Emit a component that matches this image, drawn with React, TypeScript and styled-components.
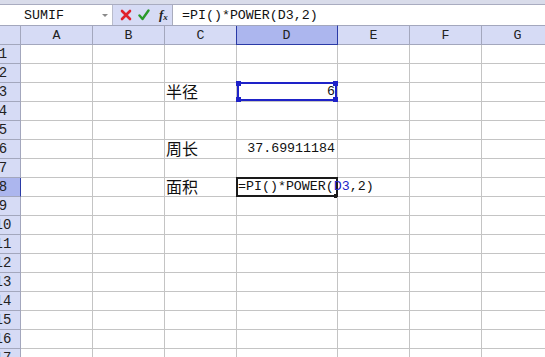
import React from "react";
import styled, { createGlobalStyle, css } from "styled-components";

const GlobalStyle = createGlobalStyle`
  html, body { margin: 0; padding: 0; background: #ffffff; overflow: hidden; }
  body { font-family: "Liberation Mono", "Noto Sans CJK SC", monospace; }
`;

const LATIN = `"Liberation Mono", "Noto Sans CJK SC", monospace`;
const CJK = `"Noto Sans CJK SC", sans-serif`;

const HEADER_BG = "rgb(214, 219, 245)";
const HEADER_ACTIVE = "rgb(172, 182, 238)";
const HEADER_LINE = "#a3a7bd";
const ACTIVE_LINE = "#2a3aa6";
const GRID = "#c4c4c4";

const Frame = styled.div`
  width: 545px;
  height: 357px;
  overflow: hidden;
  position: relative;
  background: #fff;
`;

const TopStrip = styled.div`
  height: 5px;
  box-sizing: border-box;
  background: #d9dcea;
  border-bottom: 1px solid #a9acc0;
`;

const FormulaBar = styled.div`
  display: flex;
  height: 20px;
  background: #fff;
`;

const NameBox = styled.div`
  position: relative;
  width: 113px;
  box-sizing: border-box;
  padding-left: 24px;
  display: flex;
  align-items: center;
  font-family: ${LATIN};
  font-size: 13.3px;
  color: #111;
  border-right: 1px solid #b9bccc;
`;

const DropArrow = styled.span`
  position: absolute;
  right: 4px;
  top: 9px;
  width: 0;
  height: 0;
  border-left: 3px solid transparent;
  border-right: 3px solid transparent;
  border-top: 3px solid #8a8a8a;
`;

const IconArea = styled.div`
  width: 60px;
  box-sizing: border-box;
  background: rgb(214, 219, 245);
  display: flex;
  align-items: center;
  padding-left: 7px;
  gap: 6px;
  border-right: 1px solid #a9acbd;
`;

const Fx = styled.span`
  font-family: "Liberation Serif", serif;
  font-style: italic;
  font-weight: bold;
  font-size: 13px;
  color: #222;
  margin-left: 3px;
  line-height: 1;
  sub {
    font-size: 9px;
    vertical-align: -1px;
  }
`;

const FormulaInput = styled.div`
  flex: 1;
  display: flex;
  align-items: center;
  padding-left: 9px;
  font-family: ${LATIN};
  font-size: 13.3px;
  color: #111;
`;

const Sheet = styled.div`
  display: grid;
  grid-template-columns: 35px 72px 72px 72px 101px 72px 72px 72px;
  grid-template-rows: 20px;
  grid-auto-rows: 19px;
  margin-left: -14px;
  width: max-content;
`;

const ColHead = styled.div<{ $active?: boolean }>`
  box-sizing: border-box;
  background: ${HEADER_BG};
  border-top: 1px solid ${HEADER_LINE};
  border-bottom: 1px solid ${HEADER_LINE};
  border-right: 1px solid ${HEADER_LINE};
  display: flex;
  align-items: center;
  justify-content: center;
  font-family: ${LATIN};
  font-size: 13.3px;
  color: #222;
  ${(p) =>
    p.$active &&
    css`
      background: ${HEADER_ACTIVE};
      border-right: 1px solid ${ACTIVE_LINE};
      border-bottom: 1px solid ${ACTIVE_LINE};
      box-shadow: inset 1px 0 0 ${ACTIVE_LINE};
      margin-left: -1px;
    `}
`;

const RowHead = styled.div<{ $active?: boolean }>`
  box-sizing: border-box;
  background: ${HEADER_BG};
  border-right: 1px solid ${HEADER_LINE};
  border-bottom: 1px solid ${HEADER_LINE};
  display: flex;
  align-items: center;
  justify-content: center;
  font-family: ${LATIN};
  font-size: 14px;
  color: #222;
  overflow: hidden;
  ${(p) =>
    p.$active &&
    css`
      background: ${HEADER_ACTIVE};
      border-right: 1px solid ${ACTIVE_LINE};
    `}
`;

const Cell = styled.div<{ $align?: "left" | "right" }>`
  position: relative;
  box-sizing: border-box;
  border-right: 1px solid ${GRID};
  border-bottom: 1px solid ${GRID};
  display: flex;
  align-items: flex-end;
  justify-content: ${(p) => (p.$align === "right" ? "flex-end" : "flex-start")};
  padding: 0 2px 1px 1px;
  font-family: ${LATIN};
  font-size: 13.3px;
  line-height: 16px;
  color: #111;
  white-space: nowrap;
`;

const CjkText = styled.span`
  font-family: ${CJK};
  font-size: 16px;
  line-height: 17px;
  color: #111;
`;

const RefText = styled.span`
  color: #2323c8;
`;

const RangeBox = styled.div`
  position: absolute;
  top: -1px;
  left: 0px;
  right: 0px;
  bottom: 0px;
  border: 2px solid #1e22c8;
  box-sizing: border-box;
  pointer-events: none;
`;

const Handle = styled.span<{ $x: "l" | "r"; $y: "t" | "b" }>`
  position: absolute;
  width: 5px;
  height: 5px;
  background: #1e22c8;
  ${(p) => (p.$x === "l" ? "left: -3px;" : "right: -3px;")}
  ${(p) => (p.$y === "t" ? "top: -3px;" : "bottom: -3px;")}
`;

const EditorBox = styled.div`
  position: absolute;
  top: -1px;
  left: -1px;
  right: -1px;
  bottom: -1px;
  border: 2px solid #1a1a1a;
  box-sizing: border-box;
  pointer-events: none;
`;

const FillHandle = styled.span`
  position: absolute;
  right: -2px;
  bottom: -3px;
  width: 4px;
  height: 4px;
  background: #1a1a1a;
`;

const EditorText = styled.span`
  position: relative;
  z-index: 1;
`;

const columns = ["A", "B", "C", "D", "E", "F", "G"];
const ROWS = 18;
const ACTIVE_COL = "D";
const ACTIVE_ROW = 8;

const CancelIcon = () => (
  <svg width="12" height="12" viewBox="0 0 12 12">
    <path d="M2 2 L10 10 M10 2 L2 10" stroke="#e0202a" strokeWidth="2.6" strokeLinecap="round" />
  </svg>
);

const ConfirmIcon = () => (
  <svg width="12" height="12" viewBox="0 0 12 12">
    <path d="M1.5 6.5 L4.5 10 L10.5 1.5" stroke="#2a9a2a" strokeWidth="2.4" fill="none" strokeLinecap="round" strokeLinejoin="round" />
  </svg>
);

const renderCell = (col: string, row: number) => {
  const key = `${col}${row}`;
  switch (key) {
    case "C3":
      return (
        <Cell key={key}>
          <CjkText>半径</CjkText>
        </Cell>
      );
    case "D3":
      return (
        <Cell key={key} $align="right">
          6
          <RangeBox>
            <Handle $x="l" $y="t" />
            <Handle $x="r" $y="t" />
            <Handle $x="l" $y="b" />
            <Handle $x="r" $y="b" />
          </RangeBox>
        </Cell>
      );
    case "C6":
      return (
        <Cell key={key}>
          <CjkText>周长</CjkText>
        </Cell>
      );
    case "D6":
      return (
        <Cell key={key} $align="right">
          37.69911184
        </Cell>
      );
    case "C8":
      return (
        <Cell key={key}>
          <CjkText>面积</CjkText>
        </Cell>
      );
    case "D8":
      return (
        <Cell key={key}>
          <EditorBox>
            <FillHandle />
          </EditorBox>
          <EditorText>
            =PI()*POWER(<RefText>D3</RefText>,2)
          </EditorText>
        </Cell>
      );
    default:
      return <Cell key={key} />;
  }
};

export default function App() {
  return (
    <>
      <GlobalStyle />
      <Frame>
        <TopStrip />
        <FormulaBar>
          <NameBox>
            SUMIF
            <DropArrow />
          </NameBox>
          <IconArea>
            <CancelIcon />
            <ConfirmIcon />
            <Fx>
              f<sub>x</sub>
            </Fx>
          </IconArea>
          <FormulaInput>=PI()*POWER(D3,2)</FormulaInput>
        </FormulaBar>
        <Sheet>
          <ColHead />
          {columns.map((c) => (
            <ColHead key={c} $active={c === ACTIVE_COL}>
              {c}
            </ColHead>
          ))}
          {Array.from({ length: ROWS }, (_, i) => i + 1).map((r) => (
            <React.Fragment key={r}>
              <RowHead $active={r === ACTIVE_ROW}>{r}</RowHead>
              {columns.map((c) => renderCell(c, r))}
            </React.Fragment>
          ))}
        </Sheet>
      </Frame>
    </>
  );
}
